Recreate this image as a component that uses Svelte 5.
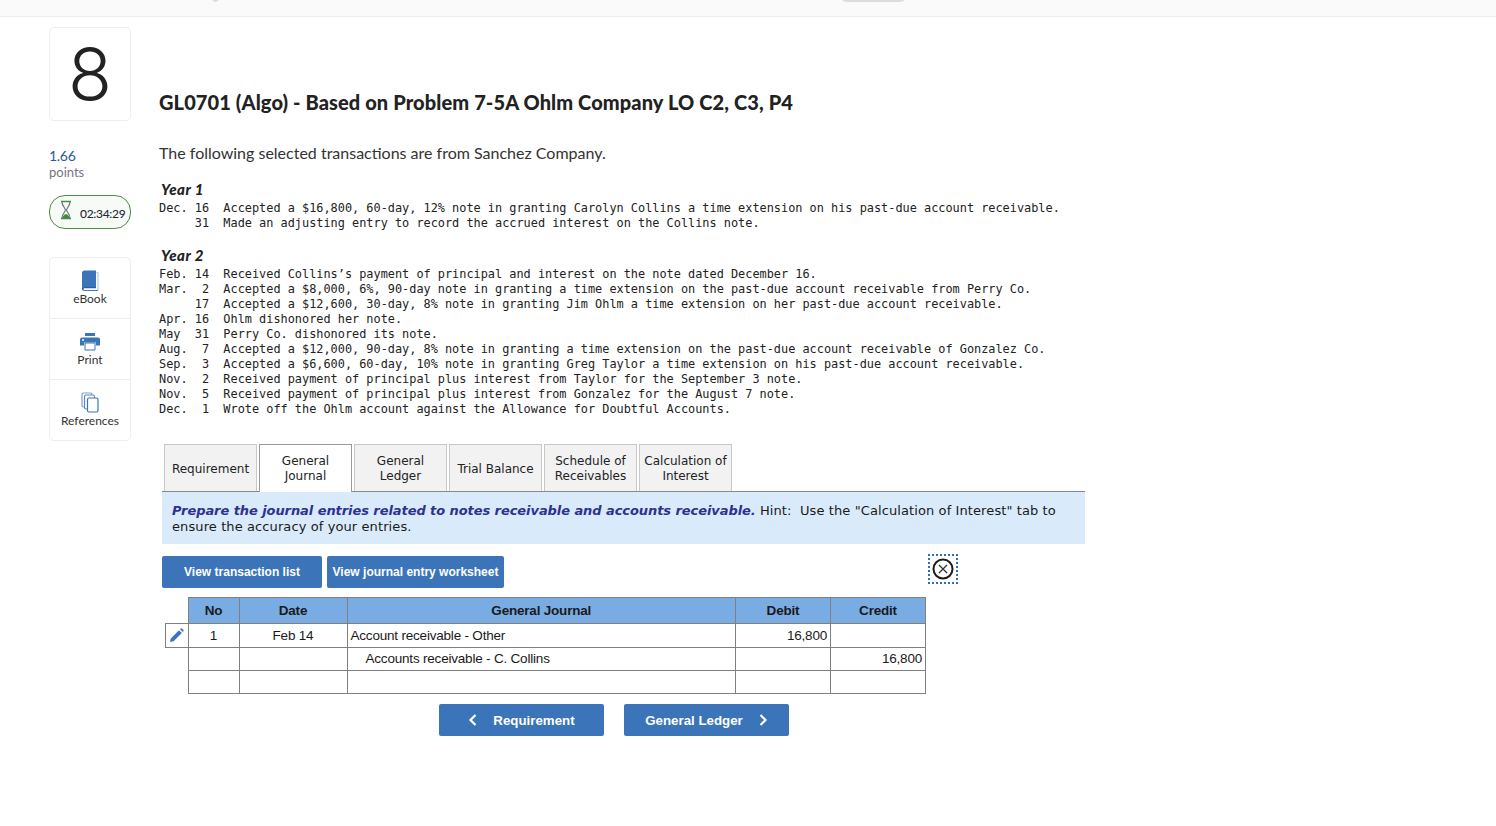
<script>
	const tools = [
		{ id: 'book', label: 'eBook' },
		{ id: 'print', label: 'Print' },
		{ id: 'refs', label: 'References' }
	];

	const year1 = `Dec. 16  Accepted a $16,800, 60-day, 12% note in granting Carolyn Collins a time extension on his past-due account receivable.
     31  Made an adjusting entry to record the accrued interest on the Collins note.`;

	const year2 = `Feb. 14  Received Collins’s payment of principal and interest on the note dated December 16.
Mar.  2  Accepted a $8,000, 6%, 90-day note in granting a time extension on the past-due account receivable from Perry Co.
     17  Accepted a $12,600, 30-day, 8% note in granting Jim Ohlm a time extension on her past-due account receivable.
Apr. 16  Ohlm dishonored her note.
May  31  Perry Co. dishonored its note.
Aug.  7  Accepted a $12,000, 90-day, 8% note in granting a time extension on the past-due account receivable of Gonzalez Co.
Sep.  3  Accepted a $6,600, 60-day, 10% note in granting Greg Taylor a time extension on his past-due account receivable.
Nov.  2  Received payment of principal plus interest from Taylor for the September 3 note.
Nov.  5  Received payment of principal plus interest from Gonzalez for the August 7 note.
Dec.  1  Wrote off the Ohlm account against the Allowance for Doubtful Accounts.`;

	const tabs = [
		{ label: 'Requirement' },
		{ label: 'General Journal', active: true },
		{ label: 'General Ledger' },
		{ label: 'Trial Balance' },
		{ label: 'Schedule of Receivables' },
		{ label: 'Calculation of Interest' }
	];

	const rows = [
		{ no: '1', date: 'Feb 14', text: 'Account receivable - Other', debit: '16,800', credit: '', edit: true },
		{ no: '', date: '', text: 'Accounts receivable - C. Collins', debit: '', credit: '16,800', indent: true },
		{ no: '', date: '', text: '', debit: '', credit: '' }
	];
</script>

<div class="topbar"><span class="pill"></span><span class="dot"></span></div>

<div class="page">
	<aside class="side">
		<div class="num">8</div>
		<div class="points"><b>1.66</b><span>points</span></div>
		<div class="timer">
			<svg width="14" height="20" viewBox="0 0 14 20" aria-hidden="true">
				<path d="M2 1.500h10M2 18.500h10" stroke="#4f8a4b" stroke-width="1.600" fill="none" />
				<path d="M3 2c0 4 3 5.500 3.500 8C6 12.500 3 14 3 18M11 2c0 4-3 5.500-3.500 8C8 12.500 11 14 11 18" stroke="#6a7480" stroke-width="1.200" fill="none" />
				<path d="M3.500 18c0-2 2-3.500 3.500-4 1.500.5 3.500 2 3.500 4z" fill="#3f8a3f" />
			</svg>
			<span>02:34:29</span>
		</div>
		<nav class="tools">
			{#each tools as t}
				<div class="tool">
					{#if t.id === 'book'}
						<svg width="18" height="21" viewBox="0 0 18 21" aria-hidden="true">
							<path d="M15.500 2.500h1.500v18H3.500" fill="none" stroke="#9dc3e8" stroke-width="1" />
							<path d="M1 3a2.500 2.500 0 0 1 2.500-2.500H15V17H3.500A2.500 2.500 0 0 0 1 19.500z" fill="#3b74b8" />
							<path d="M1 19c0-1.500 1-2 2.500-2H15v1.200H4c-1 0-1.500.3-1.500 1s.5 1 1.500 1h12.500v.8H3.500C2 20.800 1 20.300 1 19z" fill="#2d5f9e" />
						</svg>
					{:else if t.id === 'print'}
						<svg width="20" height="18" viewBox="0 0 20 18" aria-hidden="true">
							<path d="M5 0.500h10v3H5z" fill="#3b74b8" />
							<path d="M2 5h16a2 2 0 0 1 2 2v6h-4v-3H4v3H0V7a2 2 0 0 1 2-2z" fill="#3b74b8" />
							<circle cx="3" cy="7.500" r="1" fill="#fff" />
							<path d="M5 10.500h10v7H5z" fill="#fff" stroke="#3b74b8" stroke-width="1" />
						</svg>
					{:else}
						<svg width="18" height="21" viewBox="0 0 18 21" aria-hidden="true">
							<rect x="1" y="1" width="10" height="14" rx="1.500" fill="#fff" stroke="#7f9fd0" stroke-width="1.200" />
							<rect x="3.500" y="3" width="10" height="14" rx="1.500" fill="#fff" stroke="#5f88c4" stroke-width="1.200" />
							<rect x="6.500" y="6" width="10.500" height="14" rx="1.500" fill="#fff" stroke="#3b74b8" stroke-width="1.200" />
						</svg>
					{/if}
					<span>{t.label}</span>
				</div>
			{/each}
		</nav>
	</aside>

	<main class="main">
		<h1>GL0701 (Algo) - Based on Problem 7-5A Ohlm Company LO C2, C3, P4</h1>
		<p class="intro">The following selected transactions are from Sanchez Company.</p>

		<h2 class="year">Year 1</h2>
		<pre>{year1}</pre>
		<h2 class="year">Year 2</h2>
		<pre>{year2}</pre>

		<section class="work">
			<div class="tabs">
				{#each tabs as tab}
					<div class="tab" class:active={tab.active}>{tab.label}</div>
				{/each}
			</div>
			<div class="hint">
				<b>Prepare the journal entries related to notes receivable and accounts receivable.</b>
				Hint:&nbsp; Use the "Calculation of Interest" tab to ensure the accuracy of your entries.
			</div>

			<div class="actions">
				<button class="btn first">View transaction list</button>
				<button class="btn second">View journal entry worksheet</button>
				<div class="close">
					<svg width="22" height="22" viewBox="0 0 22 22" aria-hidden="true">
						<circle cx="11" cy="11" r="9.500" fill="none" stroke="#1b1b1b" stroke-width="2" />
						<path d="M7 7l8 8M15 7l-8 8" stroke="#333" stroke-width="1.300" />
					</svg>
				</div>
			</div>

			<table>
				<thead>
					<tr>
						<th class="gutter"></th>
						<th class="c-no">No</th>
						<th class="c-date">Date</th>
						<th class="c-text">General Journal</th>
						<th class="c-amt">Debit</th>
						<th class="c-amt">Credit</th>
					</tr>
				</thead>
				<tbody>
					{#each rows as r}
						<tr>
							{#if r.edit}
								<td class="gutter edit">
									<svg width="15" height="15" viewBox="0 0 15 15" aria-hidden="true">
										<path d="M1 14l.8-3.600L10 2.200l2.800 2.800-8.200 8.200z" fill="#3b74b8" />
										<path d="M11 1.200l.8-.6c.5-.3 1-.3 1.400.1l1.100 1.100c.4.400.4.900.1 1.400l-.6.800z" fill="#3b74b8" />
									</svg>
								</td>
							{:else}
								<td class="gutter"></td>
							{/if}
							<td class="center">{r.no}</td>
							<td class="center">{r.date}</td>
							<td class="text" class:indent={r.indent}>{r.text}</td>
							<td class="amt">{r.debit}</td>
							<td class="amt">{r.credit}</td>
						</tr>
					{/each}
				</tbody>
			</table>

			<div class="nav">
				<button class="btn navbtn">
					<svg width="10" height="14" viewBox="0 0 10 14" aria-hidden="true"><path d="M7.500 2L2.500 7l5 5" fill="none" stroke="#fff" stroke-width="2.200" /></svg>
					Requirement
				</button>
				<button class="btn navbtn">
					General Ledger
					<svg width="10" height="14" viewBox="0 0 10 14" aria-hidden="true"><path d="M2.500 2l5 5-5 5" fill="none" stroke="#fff" stroke-width="2.200" /></svg>
				</button>
			</div>
		</section>
	</main>
</div>

<style>
	:global(body) {
		background: #fff;
		color: #222;
		font-family: 'Lato', 'Liberation Sans', sans-serif;
	}

	.topbar {
		height: 16px;
		background: #fafafa;
		border-bottom: 1px solid #eee;
		overflow: hidden;
		position: relative;
	}

	.pill {
		position: absolute;
		left: 840px;
		top: -12px;
		width: 67px;
		height: 14px;
		border-radius: 8px;
		background: #ddd;
	}

	.dot {
		position: absolute;
		left: 212px;
		top: -5px;
		width: 7px;
		height: 7px;
		border-radius: 50%;
		background: #ddd;
	}

	.page {
		display: flex;
		padding: 10px 0 0 49px;
	}

	.side {
		width: 82px;
		flex: none;
		margin-right: 28px;
	}

	.num {
		height: 92px;
		border: 1px solid #eee;
		border-radius: 5px;
		font-family: 'Inter', sans-serif;
		font-size: 72px;
		font-weight: 300;
		line-height: 92px;
		text-align: center;
		color: #222;
	}

	.points {
		margin-top: 26px;
		display: flex;
		flex-direction: column;
	}

	.points b {
		font-weight: 400;
		font-size: 14px;
		letter-spacing: -0.3px;
		line-height: 17px;
		color: #2a5a96;
	}

	.points span {
		font-size: 13px;
		line-height: 16px;
		color: #77757f;
	}

	.timer {
		margin-top: 15px;
		height: 32px;
		border: 1px solid #4f8a4b;
		border-radius: 16px;
		background: #f7fbf5;
		display: flex;
		align-items: flex-start;
		padding-left: 9px;
		gap: 7px;
		font-size: 12px;
		font-weight: 500;
		color: #1d2a3a;
	}

	.timer svg {
		margin-top: 4px;
	}

	.timer span {
		margin-top: 10px;
		letter-spacing: -0.3px;
	}

	.tools {
		margin-top: 28px;
		border: 1px solid #eee;
		border-radius: 5px;
	}

	.tool {
		height: 60px;
		display: flex;
		flex-direction: column;
		align-items: center;
		padding-top: 12px;
		box-sizing: border-box;
		font-size: 12px;
		color: #333;
	}

	.tool + .tool {
		border-top: 1px solid #eee;
		height: 61px;
	}

	.tool svg {
		height: 21px;
	}

	.main {
		flex: none;
		width: 930px;
	}

	h1 {
		margin: 62px 0 0;
		font-size: 20px;
		letter-spacing: 0.11px;
		line-height: 26px;
		font-weight: 900;
		color: #222;
	}

	.intro {
		margin: 28px 0 0;
		font-size: 16px;
		line-height: 20px;
		color: #333;
	}

	.year {
		margin: 17px 0 0 2px;
		font-size: 15px;
		letter-spacing: 0.5px;
		line-height: 18px;
		font-weight: 900;
		font-style: italic;
		color: #222;
	}

	.year + pre {
		margin-top: 3px;
	}

	pre + .year {
		margin-top: 15px;
	}

	pre {
		margin: 0;
		font-family: 'DejaVu Sans Mono', 'Liberation Mono', monospace;
		font-size: 11.887px;
		line-height: 15px;
		color: #222;
	}

	.work {
		margin-top: 27px;
		margin-left: 3px;
		width: 923px;
	}

	.tabs {
		display: flex;
		gap: 2px;
		padding-left: 2px;
		border-bottom: 1px solid #8a8a8a;
	}

	.tab {
		width: 93px;
		height: 47px;
		box-sizing: border-box;
		display: flex;
		align-items: center;
		justify-content: center;
		text-align: center;
		padding: 2px 2px 0;
		border: 1px solid #c8c8c8;
		border-bottom: none;
		background: #f2f2f2;
		font-family: 'DejaVu Sans', sans-serif;
		font-size: 12px;
		line-height: 15px;
		color: #222;
	}

	.tab.active {
		background: #fff;
		border-color: #999;
		margin-bottom: -1px;
		height: 48px;
		padding: 1px 2px;
	}

	.hint {
		background: #d9ebfa;
		padding: 11px 10px 8px;
		height: 33px;
		font-family: 'DejaVu Sans', sans-serif;
		font-size: 13px;
		letter-spacing: 0.1px;
		line-height: 16px;
		color: #1a1a1a;
	}

	.hint b {
		font-style: italic;
		letter-spacing: -0.07px;
		color: #2e3192;
	}

	.actions {
		display: flex;
		align-items: flex-start;
		gap: 5px;
		margin-top: 12px;
	}

	.btn {
		border: none;
		border-radius: 2px;
		background: #3b74b8;
		color: #fff;
		font-family: 'Liberation Sans', sans-serif;
		font-weight: 700;
		cursor: pointer;
		padding: 0;
	}

	.first {
		width: 160px;
		height: 32px;
		font-size: 12px;
	}

	.second {
		width: 177px;
		height: 32px;
		font-size: 12px;
	}

	.close {
		margin: -2px 0 0 419px;
		width: 26px;
		height: 26px;
		border: 2px dotted #2f6fb7;
		display: flex;
		align-items: center;
		justify-content: center;
	}

	table {
		border-collapse: collapse;
		table-layout: fixed;
		margin: 9px 0 0 3px;
		width: 761px;
		font-family: 'Liberation Sans', sans-serif;
		font-size: 13.5px;
		letter-spacing: -0.2px;
		color: #1a1a1a;
	}

	th,
	td {
		border: 1px solid #808080;
		padding: 0;
		height: 22px;
	}

	tbody tr:first-child td {
		height: 23px;
	}

	tbody tr:nth-child(2) td {
		padding-bottom: 1px;
		height: 21px;
	}

	th {
		background: #7aace4;
		height: 25px;
		font-weight: 700;
	}

	.gutter {
		width: 22px;
		border: none;
		background: none;
	}

	td.edit {
		border: 1px solid #808080;
		text-align: center;
		vertical-align: middle;
	}

	td.edit svg {
		display: block;
		margin: 0 auto;
	}

	.c-no {
		width: 50px;
	}

	.c-date {
		width: 107px;
	}

	.c-amt {
		width: 94px;
	}

	.center {
		text-align: center;
	}

	.text {
		padding-left: 3px;
	}

	.text.indent {
		padding-left: 18px;
	}

	.amt {
		text-align: right;
		padding-right: 3px;
	}

	.nav {
		display: flex;
		gap: 20px;
		margin: 10px 0 0 277px;
	}

	.navbtn {
		width: 165px;
		height: 32px;
		font-size: 13.3px;
		display: flex;
		align-items: center;
		justify-content: center;
		gap: 15px;
	}
</style>
